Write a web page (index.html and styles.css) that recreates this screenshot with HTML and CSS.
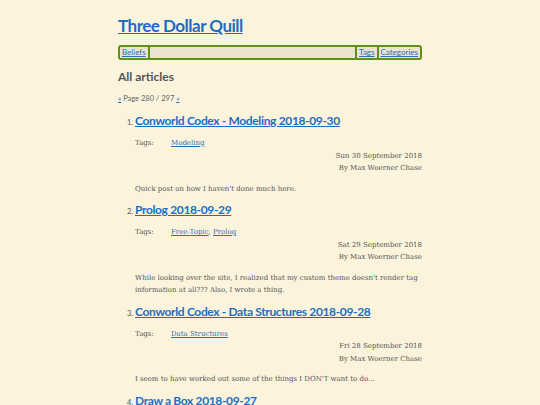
FILE: index.html
```html
<!DOCTYPE html>
<html>
<head>
<meta charset="utf-8">
<link rel="stylesheet" href="styles.css">
</head>
<body>
<div class="page">
  <h1 class="site-title"><a href="#">Three Dollar Quill</a></h1>
  <nav class="nav">
    <a href="#" class="nav-left">Beliefs</a>
    <span class="nav-fill"></span>
    <a href="#" class="nav-right">Tags</a>
    <a href="#" class="nav-right">Categories</a>
  </nav>
  <h2 class="section-title">All articles</h2>
  <p class="pager"><a href="#">«</a> Page 280 / 297 <a href="#">»</a></p>
  <ol class="articles">
    <li class="article">
      <h3 class="article-title"><a href="#">Conworld Codex - Modeling 2018-09-30</a></h3>
      <div class="tags"><span class="tags-label">Tags:</span><span><a href="#">Modeling</a></span></div>
      <div class="meta"><div>Sun 30 September 2018</div><div>By Max Woerner Chase</div></div>
      <p class="summary">Quick post on how I haven't done much here.</p>
    </li>
    <li class="article">
      <h3 class="article-title"><a href="#">Prolog 2018-09-29</a></h3>
      <div class="tags"><span class="tags-label">Tags:</span><span><a href="#">Free-Topic</a>, <a href="#">Prolog</a></span></div>
      <div class="meta"><div>Sat 29 September 2018</div><div>By Max Woerner Chase</div></div>
      <p class="summary">While looking over the site, I realized that my custom theme doesn't render tag information at all??? Also, I wrote a thing.</p>
    </li>
    <li class="article">
      <h3 class="article-title"><a href="#">Conworld Codex - Data Structures 2018-09-28</a></h3>
      <div class="tags"><span class="tags-label">Tags:</span><span><a href="#">Data Structures</a></span></div>
      <div class="meta"><div>Fri 28 September 2018</div><div>By Max Woerner Chase</div></div>
      <p class="summary">I seem to have worked out some of the things I DON'T want to do...</p>
    </li>
    <li class="article">
      <h3 class="article-title"><a href="#">Draw a Box 2018-09-27</a></h3>
    </li>
  </ol>
</div>
</body>
</html>
```

FILE: styles.css
```css
html, body {
  margin: 0;
  padding: 0;
  background: #fbf3dc;
}
body {
  font-family: "DejaVu Serif", serif;
  font-size: 7px;
  line-height: 12px;
  color: #555;
}
a { color: #1b6ec2; }
.page {
  width: 304px;
  margin: 0 auto;
  padding-top: 15px;
}
.site-title {
  font-family: Lato, sans-serif;
  font-weight: 700;
  font-size: 17px;
  line-height: 22px;
  letter-spacing: -0.5px;
  margin: 0 0 8px 0;
}
.site-title a { color: #1b6ec2; }
.nav {
  display: flex;
  align-items: stretch;
  border: 2px solid #5f9217;
  border-radius: 3px;
  background: #ebe3cf;
  font-family: Lato, sans-serif;
  font-size: 8px;
  line-height: 11px;
  height: 11px;
}
.nav a { padding: 0 2px; color: #2d6fb5; }
.nav-left { border-right: 2px solid #5f9217; }
.nav-right { border-left: 2px solid #5f9217; }
.nav-fill { flex: 1; }
.section-title {
  font-family: Lato, sans-serif;
  font-weight: 700;
  font-size: 12px;
  line-height: 16px;
  color: #555;
  margin: 9px 0 0 0;
}
.pager {
  font-family: Lato, sans-serif;
  font-size: 7.5px;
  margin: 8px 0 0 0;
  color: #666;
}
.articles {
  margin: 0;
  padding: 0 0 0 17px;
}
.article {
  font-family: Lato, sans-serif;
  font-size: 7.5px;
  padding-top: 8px;
}
.article-title {
  font-family: Lato, sans-serif;
  font-weight: 700;
  font-size: 12px;
  line-height: 16px;
  letter-spacing: -0.35px;
  margin: 0;
}
.article-title a { color: #1b6ec2; }
.tags {
  font-family: "DejaVu Serif", serif;
  font-size: 7px;
  line-height: 12.5px;
  margin-top: 8px;
  display: flex;
}
.tags-label { width: 36px; }
.tags a { color: #2d6fb5; }
.meta {
  font-family: "DejaVu Serif", serif;
  font-size: 7px;
  line-height: 12.5px;
  text-align: right;
}
.summary {
  font-family: "DejaVu Serif", serif;
  font-size: 7px;
  line-height: 12.5px;
  margin: 8px 0 0 0;
}
.article + .article { padding-top: 7px; }
```
